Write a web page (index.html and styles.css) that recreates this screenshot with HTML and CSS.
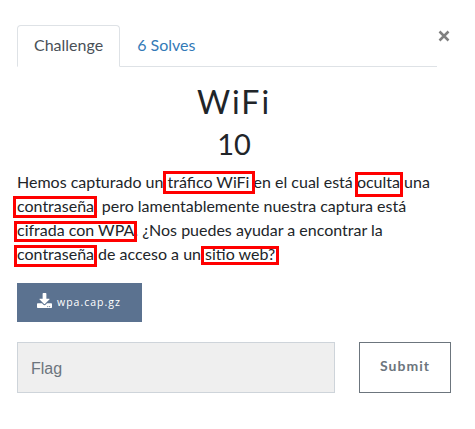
FILE: index.html
```html
<!DOCTYPE html>
<html lang="es">
<head>
<meta charset="utf-8">
<title>WiFi</title>
<link rel="stylesheet" href="styles.css">
</head>
<body>
<main class="modal">
  <header class="top">
    <nav class="tabs">
      <a class="tab active">Challenge</a>
      <a class="tab">6 Solves</a>
    </nav>
    <svg class="close" viewBox="0 0 12 12"><path d="M1.500 1.500l9 9M10.500 1.500l-9 9"/></svg>
  </header>
  <h2 class="name">WiFi</h2>
  <h3 class="value">10</h3>
  <div class="desc">
    <p>Hemos capturado un tráfico WiFi en el cual está oculta una<br>contraseña, pero lamentablemente nuestra captura está<br>cifrada con WPA. ¿Nos puedes ayudar a encontrar la<br>contraseña de acceso a un sitio web?</p>
    <i class="mark traffic"></i>
    <i class="mark hidden-word"></i>
    <i class="mark password-a"></i>
    <i class="mark cipher"></i>
    <i class="mark password-b"></i>
    <i class="mark site"></i>
  </div>
  <a class="file">
    <svg class="icon" viewBox="0 0 512 512"><path d="M216 0h80c13.300 0 24 10.700 24 24v168h87.700c17.800 0 26.700 21.500 14.100 34.100L269.700 378.300c-7.500 7.500-19.800 7.500-27.300 0L90.100 226.100c-12.600-12.600-3.700-34.100 14.100-34.100H192V24c0-13.300 10.700-24 24-24zm296 376v112c0 13.300-10.700 24-24 24H24c-13.300 0-24-10.700-24-24V376c0-13.300 10.700-24 24-24h146.700l49 49c20.100 20.100 52.500 20.100 72.600 0l49-49H488c13.300 0 24 10.700 24 24zm-124 88c0-11-9-20-20-20s-20 9-20 20 9 20 20 20 20-9 20-20zm64 0c0-11-9-20-20-20s-20 9-20 20 9 20 20 20 20-9 20-20z"/></svg>
    <span>wpa.cap.gz</span>
  </a>
  <div class="form">
    <input class="flag" placeholder="Flag">
    <button class="submit">Submit</button>
  </div>
</main>
</body>
</html>
```
FILE: styles.css
```css
* { box-sizing: border-box; }
body {
  margin: 0;
  background: #fff;
  color: #212529;
  font: 16px/24px Lato, sans-serif;
}
.modal { padding: 25px 24px 0 17px; }
.top { display: flex; }
.tabs {
  display: flex;
  flex: none;
  width: 420px;
  height: 42px;
  border-bottom: 1px solid #dee2e6;
}
.tab {
  height: 42px;
  padding: 7px 16px;
  border: 1px solid transparent;
  border-radius: 4px 4px 0 0;
  color: #337ab7;
}
.tab.active {
  background: #fff;
  border-color: #dee2e6 #dee2e6 #fff;
  color: #495057;
}
.close {
  flex: none;
  width: 12px;
  height: 12px;
  margin: 4.500px 0 0 1px;
  fill: none;
  stroke: #808080;
  stroke-width: 2.500;
}
.name, .value {
  margin: 0;
  text-align: center;
  font-weight: 400;
}
.name {
  height: 56px;
  padding-top: 16px;
  font-size: 32px;
  line-height: 38px;
  letter-spacing: 2px;
}
.value {
  padding-top: 4px;
  font-size: 29px;
  line-height: 34px;
}
.desc { position: relative; margin-top: 9px; }
.desc p { margin: 0; white-space: nowrap; }
.mark { position: absolute; border: 3px solid #f00; }
.traffic { left: 146px; top: 1px; width: 92px; height: 23px; }
.hidden-word { left: 338px; top: 2px; width: 48px; height: 25px; }
.password-a { left: -4px; top: 26px; width: 84px; height: 22px; }
.cipher { left: -3px; top: 51px; width: 123px; height: 21px; }
.password-b { left: -3px; top: 75px; width: 83px; height: 22px; }
.site { left: 184px; top: 76px; width: 78px; height: 19px; }
.file {
  display: flex;
  align-items: center;
  width: 125px;
  height: 39px;
  margin-top: 17px;
  padding-left: 20px;
  background: #5b7290;
  color: #fff;
  font: 10.500px/16px "Open Sans", sans-serif;
  letter-spacing: 1px;
}
.file span { margin-top: -2px; }
.icon { width: 15px; height: 15px; margin: -4px 5px 0 0; fill: #fff; }
.form {
  display: flex;
  justify-content: space-between;
  margin-top: 20px;
}
.flag {
  width: 318px;
  height: 51px;
  padding: 2px 13px 0;
  border: 1px solid #ced4da;
  border-radius: 0;
  background: #efefef;
  font: 16px "Liberation Sans", sans-serif;
}
.flag::placeholder { color: #6c757d; opacity: 1; }
.submit {
  width: 92px;
  height: 51px;
  padding: 0 0 5px;
  border: 1px solid #6c757d;
  background: #fff;
  color: #6c757d;
  font: 700 14px Lato, sans-serif;
  letter-spacing: 1px;
}
```
